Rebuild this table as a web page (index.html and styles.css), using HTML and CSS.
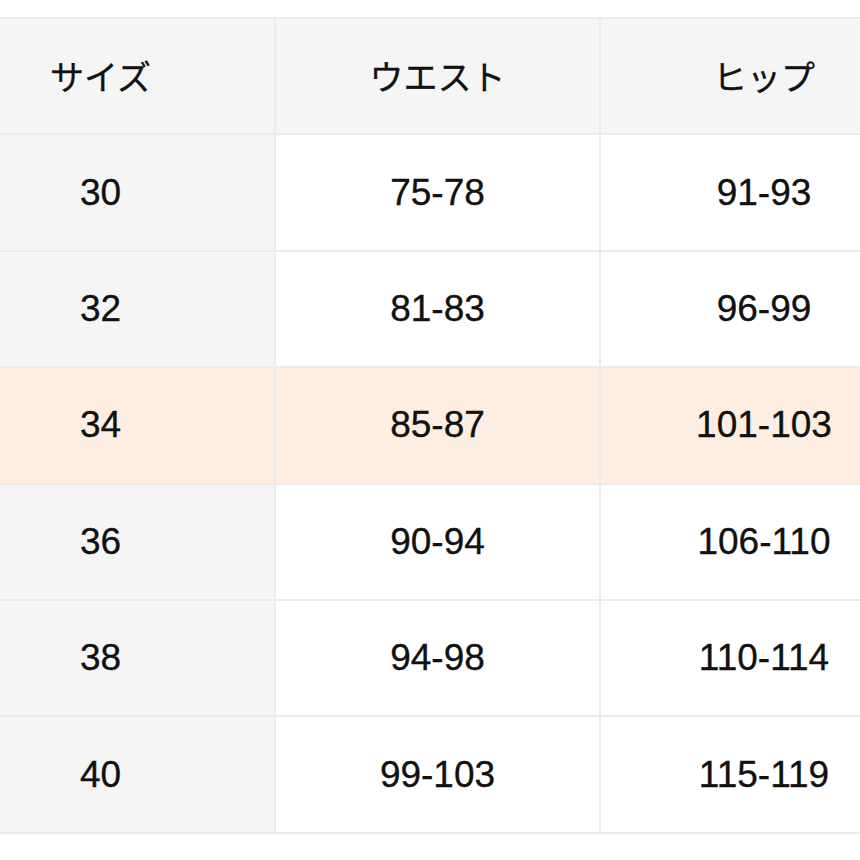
FILE: index.html
```html
<!DOCTYPE html>
<html lang="ja">
<head>
<meta charset="utf-8">
<title>サイズ表</title>
<link rel="stylesheet" href="styles.css">
</head>
<body>
<div class="frame">
  <div class="size-table">
    <div class="cell head">サイズ</div>
    <div class="cell head">ウエスト</div>
    <div class="cell head">ヒップ</div>

    <div class="cell key">30</div>
    <div class="cell">75-78</div>
    <div class="cell">91-93</div>

    <div class="cell key">32</div>
    <div class="cell">81-83</div>
    <div class="cell">96-99</div>

    <div class="cell key hl">34</div>
    <div class="cell hl">85-87</div>
    <div class="cell hl">101-103</div>

    <div class="cell key">36</div>
    <div class="cell">90-94</div>
    <div class="cell">106-110</div>

    <div class="cell key">38</div>
    <div class="cell">94-98</div>
    <div class="cell">110-114</div>

    <div class="cell key">40</div>
    <div class="cell">99-103</div>
    <div class="cell">115-119</div>
  </div>
</div>
</body>
</html>
```

FILE: styles.css
```css
html, body {
  margin: 0;
  padding: 0;
  background: #ffffff;
}

.frame {
  width: 860px;
  height: 860px;
  overflow: hidden;
  padding-top: 17px;
  box-sizing: border-box;
}

.size-table {
  display: grid;
  grid-template-columns: 347px 323px 326px;
  grid-auto-rows: 114.4px;
  gap: 2px;
  padding: 2px 0;
  width: 1000px;
  margin-left: -73px;
  background: #ebebeb;
  font-family: "Liberation Sans", Arial, "Noto Sans CJK JP", sans-serif;
  font-size: 37px;
  color: #111111;
  -webkit-text-stroke: 0.35px #111111;
}

.cell {
  display: flex;
  align-items: center;
  justify-content: center;
  background: #ffffff;
}

.cell.head {
  background: #f5f5f5;
  font-family: "Noto Sans CJK JP", sans-serif;
  font-size: 34px;
  font-weight: 400;
  -webkit-text-stroke: 0.3px #111111;
  padding-bottom: 2px;
}

.cell.key {
  background: #f5f5f5;
}

.cell.hl {
  background: #fdeee1;
}
```
